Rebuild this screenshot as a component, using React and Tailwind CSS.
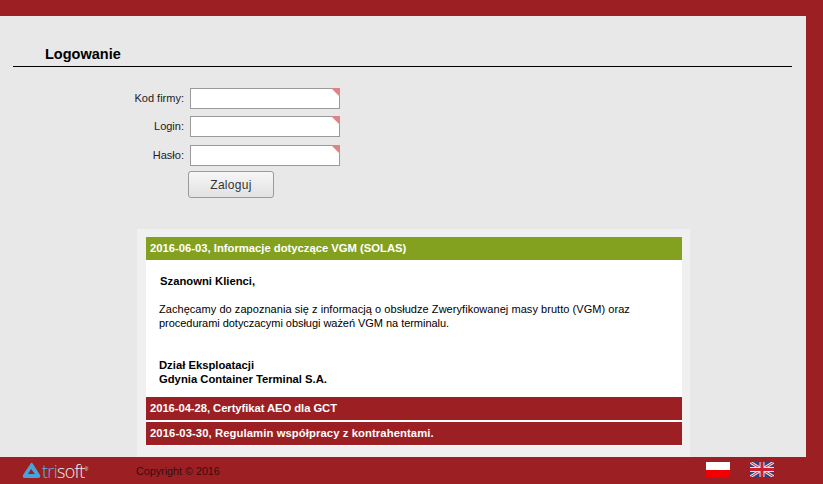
import React from 'react';

const fields = [
  { label: 'Kod firmy:', type: 'text' },
  { label: 'Login:', type: 'text' },
  { label: 'Hasło:', type: 'password' },
];

const closedNews = [
  { title: '2016-04-28, Certyfikat AEO dla GCT', spacing: 'tracking-[-0.06px]' },
  { title: '2016-03-30, Regulamin współpracy z kontrahentami.', spacing: 'tracking-[0.1px]' },
];

function Field({ label, type }) {
  return (
    <div className="flex items-center h-[21px]">
      <label className="w-[170px] pr-[6px] text-right text-[11px] text-[#222]">{label}</label>
      <div className="relative w-[150px] h-[21px]">
        <input type={type} className="block w-full h-full bg-white border border-[#9a9a9a] outline-none" />
        {/* required marker */}
        <svg className="absolute top-0 right-0" width="9" height="9" viewBox="0 0 9 9">
          <polygon points="0,0 9,0 9,9" fill="#dd8487" />
        </svg>
      </div>
    </div>
  );
}

function TrisoftLogo() {
  return (
    <div className="flex items-center w-[136px] pl-[22px]">
      <svg width="20" height="18" viewBox="0 0 20 18">
        <path d="M9 1 Q10 0 11 2 L18 13 Q19 16 16 16 L3 16 Q0 16 1 13 Z" fill="#4aa3d8" />
        <path d="M9 7 L13 12 L6 12 Z" fill="#9c2023" />
      </svg>
      <span className="text-[18px] leading-none font-['Open_Sans',sans-serif] font-light tracking-[-0.7px] text-[#5fb3e2]">tri</span>
      <span className="text-[18px] leading-none font-['Open_Sans',sans-serif] font-light tracking-[-0.7px] text-[#e8eef2]">soft</span>
      <span className="self-start mt-[4px] text-[5px] text-[#e8eef2]">®</span>
    </div>
  );
}

function FlagPl() {
  return (
    <div className="w-[24px] h-[15px] flex flex-col">
      <div className="h-[8px] bg-white" />
      <div className="h-[7px] bg-[#f00000]" />
    </div>
  );
}

function FlagUk() {
  return (
    <svg width="24" height="15" viewBox="0 0 24 15">
      <rect width="24" height="15" fill="#3b3f77" />
      <path d="M0 0 L24 15 M24 0 L0 15" stroke="#e8e0e4" strokeWidth="3" />
      <path d="M0 0 L24 15 M24 0 L0 15" stroke="#c8202f" strokeWidth="1" />
      <path d="M12 0 V15 M0 7.5 H24" stroke="#e8e0e4" strokeWidth="5" />
      <path d="M12 0 V15 M0 7.5 H24" stroke="#c8202f" strokeWidth="3" />
    </svg>
  );
}

export default function App() {
  return (
    <div className="w-[823px] h-[484px] overflow-hidden flex flex-col bg-[#9c2023] font-['Liberation_Sans',Arial,sans-serif]">
      <div className="h-[16px] shrink-0" />

      <main className="w-[806px] h-[441px] shrink-0 bg-[#e8e8e8] flex flex-col">
        {/* Heading */}
        <div className="mt-[29px] ml-[13px] w-[779px] h-[22px] border-b border-black pl-[32px]">
          <h1 className="text-[14.5px] leading-[18px] font-bold text-black">Logowanie</h1>
        </div>

        {/* Login form */}
        <form className="mt-[21px] ml-[20px] flex flex-col">
          <Field label={fields[0].label} type={fields[0].type} />
          <div className="h-[7px]" />
          <Field label={fields[1].label} type={fields[1].type} />
          <div className="h-[8px]" />
          <Field label={fields[2].label} type={fields[2].type} />
        </form>
        <button className="mt-[5px] ml-[188px] w-[86px] h-[27px] rounded-[3px] border border-[#9a9a9a] bg-linear-to-b from-[#f6f6f6] to-[#e2e2e2] text-[12px] tracking-[0.3px] text-[#333]">
          Zaloguj
        </button>

        {/* News */}
        <section className="mt-[31px] ml-[137px] w-[553px] h-[228px] bg-[#f0f0f0] pt-[8px] pl-[9px] pr-[8px]">
          <div className="bg-white h-[160px] flex flex-col">
            <h2 className="h-[23px] shrink-0 bg-[#84a01f] pl-[4px] text-[11.25px] leading-[23px] font-bold text-white">
              2016-06-03, Informacje dotyczące VGM (SOLAS)
            </h2>
            <div className="px-[13px] text-[11.25px] leading-[14px] text-black">
              <p className="mt-[14px] ml-px font-bold">Szanowni Klienci,</p>
              <p className="mt-[14px] w-[500px] text-[11px]">
                <span className="tracking-[0.05px]">Zachęcamy do zapoznania się z informacją o obsłudze Zweryfikowanej masy brutto (VGM) oraz </span>
                <span className="tracking-[-0.04px]">procedurami dotyczacymi obsługi ważeń VGM na terminalu.</span>
              </p>
              <p className="mt-[28px] font-bold">
                Dział Eksploatacji
                <br />
                Gdynia Container Terminal S.A.
              </p>
            </div>
          </div>
          <div className="bg-white flex flex-col gap-[2px] pb-[1px]">
            {closedNews.map((item) => (
              <h2 key={item.title} className={`h-[23px] bg-[#9c2023] pl-[4px] text-[11.25px] leading-[23px] font-bold text-white ${item.spacing}`}>
                {item.title}
              </h2>
            ))}
          </div>
        </section>
      </main>

      {/* Footer */}
      <footer className="flex-1 flex items-center w-[806px]">
        <TrisoftLogo />
        <span className="mt-[1px] text-[10.75px] text-[#3a0c0d]">Copyright © 2016</span>
        <div className="ml-auto mr-[32px] flex items-center gap-[20px] -mt-[3px]">
          <FlagPl />
          <FlagUk />
        </div>
      </footer>
    </div>
  );
}
